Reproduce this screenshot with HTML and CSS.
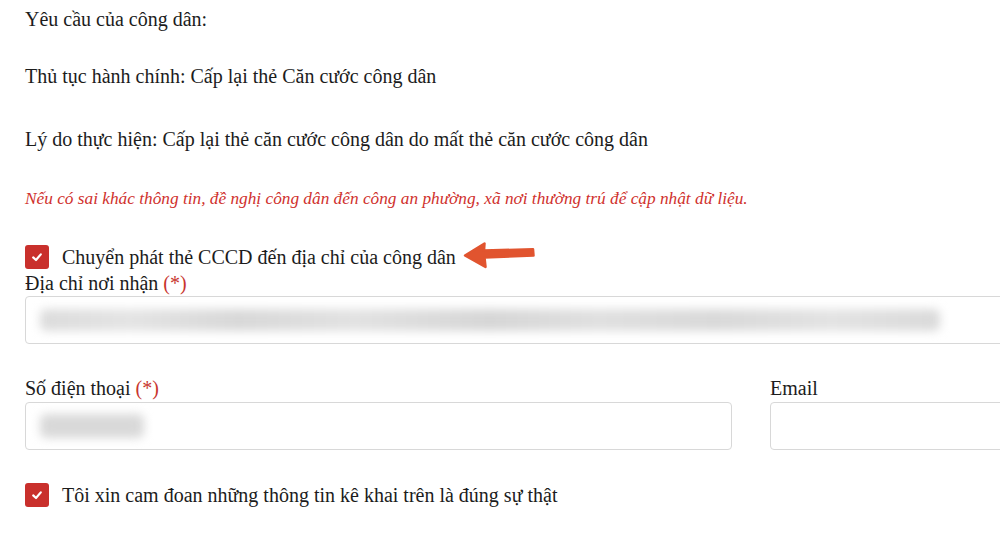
FILE: index.html
```html
<!DOCTYPE html>
<html lang="vi">
<head>
<meta charset="utf-8">
<title>Yêu cầu của công dân</title>
<link rel="stylesheet" href="styles.css">
</head>
<body>
<div class="page">
  <p class="line l1">Yêu cầu của công dân:</p>
  <p class="line l2">Thủ tục hành chính: Cấp lại thẻ Căn cước công dân</p>
  <p class="line l3">Lý do thực hiện: Cấp lại thẻ căn cước công dân do mất thẻ căn cước công dân</p>
  <p class="note">Nếu có sai khác thông tin, đề nghị công dân đến công an phường, xã nơi thường trú để cập nhật dữ liệu.</p>

  <div class="check-row first">
    <span class="box"><svg viewBox="0 0 24 24" width="24" height="24"><path d="M8.2 12.4 L11 15 L15.8 9.4" fill="none" stroke="#fff" stroke-width="2.2" stroke-linecap="round" stroke-linejoin="round"/></svg></span>
    <span class="check-label">Chuyển phát thẻ CCCD đến địa chỉ của công dân</span>
    <svg class="arrow" viewBox="0 0 74 28" width="74" height="28"><path d="M2 13.5 L21.5 1.5 L21 8.6 L70 7.2 L70.5 13.6 L21.5 15.4 L22.5 25 Z" fill="#e1542f" stroke="#e1542f" stroke-width="2.5" stroke-linejoin="round"/></svg>
  </div>

  <label class="field-label addr-label">Địa chỉ nơi nhận <span class="req">(*)</span></label>
  <div class="input wide"><div class="blur blur-addr"></div></div>

  <div class="row">
    <div class="col">
      <label class="field-label">Số điện thoại <span class="req">(*)</span></label>
      <div class="input"><div class="blur blur-phone"></div></div>
    </div>
    <div class="col">
      <label class="field-label">Email</label>
      <div class="input"></div>
    </div>
  </div>

  <div class="check-row second">
    <span class="box"><svg viewBox="0 0 24 24" width="24" height="24"><path d="M8.2 12.4 L11 15 L15.8 9.4" fill="none" stroke="#fff" stroke-width="2.2" stroke-linecap="round" stroke-linejoin="round"/></svg></span>
    <span class="check-label">Tôi xin cam đoan những thông tin kê khai trên là đúng sự thật</span>
  </div>
</div>
</body>
</html>
```
FILE: styles.css
```css
html, body {
  margin: 0;
  padding: 0;
  background: #fff;
  overflow: hidden;
}
body {
  font-family: "Liberation Serif", "Times New Roman", serif;
  color: #1c1c1c;
  font-size: 20px;
  line-height: 24px;
}
.page {
  width: 1150px;
  padding: 7px 0 0 25px;
  position: relative;
}
.line {
  margin: 0;
}
.l2 { margin-top: 33px; }
.l3 { margin-top: 39px; }
.note {
  margin: 38px 0 0;
  color: #d0312d;
  font-style: italic;
  font-size: 17.3px;
  line-height: 20px;
}
.check-row {
  display: flex;
  align-items: center;
  gap: 13px;
  height: 24px;
  position: relative;
}
.check-row.first { margin-top: 36px; }
.check-row.second { margin-top: 33px; }
.box {
  width: 24px;
  height: 24px;
  border-radius: 3px;
  background: #c9302c;
  display: block;
  flex: none;
}
.box svg { display: block; }
.check-label { line-height: 24px; }
.arrow {
  position: absolute;
  left: 438px;
  top: -3px;
}
.field-label {
  display: block;
  line-height: 24px;
}
.addr-label { margin-top: 2px; }
.req { color: #c8352e; }
.input {
  border: 1px solid #d8d8d8;
  border-radius: 4px;
  height: 46px;
  margin-top: 1px;
  background: #fff;
  position: relative;
  overflow: hidden;
}
.wide { width: 1100px; }
.row {
  display: grid;
  grid-template-columns: 707px 1fr;
  column-gap: 38px;
  margin-top: 32px;
}
.row .input { margin-top: 2px; }
.blur {
  position: absolute;
  background: #d9d9d9;
  filter: blur(5px);
  border-radius: 6px;
}
.blur-addr {
  left: 14px;
  top: 12px;
  width: 900px;
  height: 22px;
  background: linear-gradient(90deg, #dcdcdc 0%, #e4e4e4 10%, #d8d8d8 22%, #e2e2e2 35%, #d6d6d6 50%, #e0e0e0 62%, #d9d9d9 75%, #e3e3e3 88%, #dadada 100%);
}
.blur-phone {
  left: 14px;
  top: 11px;
  width: 104px;
  height: 24px;
}
```
